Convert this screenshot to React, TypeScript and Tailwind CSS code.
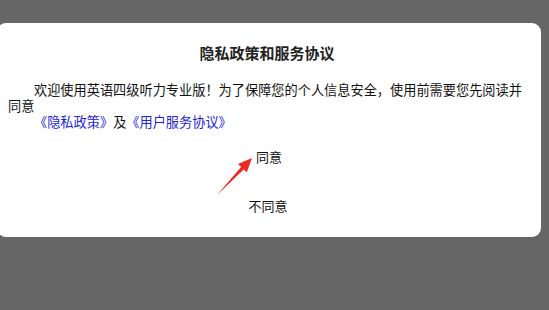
import React from 'react';

const font = { fontFamily: '"Noto Sans CJK SC", "Noto Sans", sans-serif' };

function Arrow() {
  return (
    <svg
      className="absolute left-[210px] top-[150px] pointer-events-none"
      width="50"
      height="50"
      viewBox="0 0 50 50"
    >
      <polygon
        points="7,45 31.1,17 28,14.1 42,8 36.8,22.3 33.7,19.4"
        fill="#ee2a24"
      />
    </svg>
  );
}

export default function App() {
  return (
    <div className="relative h-[310px] w-[549px] overflow-hidden bg-[#666666] pt-[23px]" style={font}>
      {/* Privacy dialog */}
      <div className="-ml-[3px] flex h-[214px] w-[544px] flex-col rounded-[9px] bg-white pl-[11px] pr-[15px] pt-[20px] text-[#111]">
        <h2 className="text-center text-[15px] font-bold leading-[20px] text-[#222]">
          隐私政策和服务协议
        </h2>

        <p className="mt-[19px] indent-[26px] text-[13.2px] leading-[16px]">
          欢迎使用英语四级听力专业版！为了保障您的个人信息安全，使用前需要您先阅读并同意
        </p>
        <p className="indent-[26px] text-[13.2px] leading-[16px]">
          <span className="text-[#2323d8]">《隐私政策》</span>及
          <span className="text-[#2323d8]">《用户服务协议》</span>
        </p>

        <button className="mx-auto mt-[12px] h-[30px] pl-[4px] text-[13px] text-[#111]">同意</button>
        <button className="mx-auto mt-[19px] h-[30px] pl-[2px] text-[13px] text-[#111]">不同意</button>
      </div>

      <Arrow />
    </div>
  );
}
